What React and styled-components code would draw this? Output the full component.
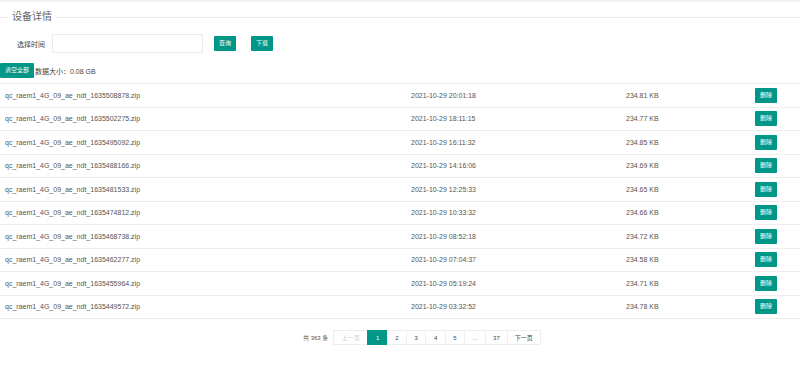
import styled, { createGlobalStyle } from "styled-components";

const GlobalStyle = createGlobalStyle`
  html, body {
    margin: 0;
    padding: 0;
    background: #fff;
  }
  body {
    font-family: "Liberation Sans", Arial, "Noto Sans CJK SC", sans-serif;
    font-size: 7px;
    color: #555;
  }
`;

const TEAL = "#009688";

const Page = styled.div`
  width: 800px;
  border-top: 2px solid #f2f2f2;
`;

const Legend = styled.div`
  display: flex;
  align-items: center;
  height: 12px;
  margin-top: 9px;

  &::before,
  &::after {
    content: "";
    height: 1px;
    background: #eee;
  }
  &::before {
    width: 8px;
  }
  &::after {
    flex: 1;
  }
`;

const LegendText = styled.span`
  padding: 0 4px;
  font-size: 10px;
  color: #666;
  line-height: 12px;
`;

const FormRow = styled.div`
  display: flex;
  align-items: center;
  margin-top: 11px;
`;

const Label = styled.label`
  width: 52px;
  padding-right: 7px;
  text-align: right;
  color: #444;
  box-sizing: border-box;
`;

const Input = styled.div`
  width: 151px;
  height: 19px;
  border: 1px solid #eaeaea;
  border-radius: 1px;
  box-sizing: border-box;
`;

const Button = styled.button`
  height: 15px;
  padding: 0 5px;
  margin: 0;
  margin-left: ${(p) => p.$gap || 0}px;
  border: none;
  border-radius: 1px;
  background: ${TEAL};
  color: #fff;
  font-family: inherit;
  font-size: 6px;
  line-height: 15px;
  cursor: pointer;
  white-space: nowrap;
`;

const Toolbar = styled.div`
  display: flex;
  align-items: center;
  gap: 1px;
  margin-top: 10px;
  height: 15px;
`;

const SizeInfo = styled.span`
  color: #444;
`;

const Table = styled.div`
  margin-top: 5px;
  border-top: 1px solid #eee;
`;

const Row = styled.div`
  display: grid;
  grid-template-columns: 406px 215px 129px 50px;
  align-items: center;
  height: 23.5px;
  border-bottom: 1px solid #eee;
  box-sizing: border-box;
`;

const Cell = styled.div`
  padding-left: 5px;
  white-space: nowrap;
  color: #555;
`;

const Pager = styled.div`
  display: flex;
  align-items: center;
  margin-top: 11px;
  padding-left: 298px;
`;

const Count = styled.span`
  padding: 0 5px;
  font-size: 6px;
  color: #555;
`;

const PageItem = styled.span`
  display: inline-flex;
  align-items: center;
  justify-content: center;
  height: 15px;
  padding: 0 ${(p) => (p.$wide ? 7.5 : 7)}px;
  margin-right: -1px;
  border: 1px solid ${(p) => (p.$current ? TEAL : "#eee")};
  background: ${(p) => (p.$current ? TEAL : "#fff")};
  color: ${(p) => (p.$current ? "#fff" : p.$disabled ? "#d2d2d2" : "#444")};
  font-size: 6px;
  box-sizing: border-box;
`;

const files = [
  ["1635508878", "2021-10-29 20:01:18", "234.81 KB"],
  ["1635502275", "2021-10-29 18:11:15", "234.77 KB"],
  ["1635495092", "2021-10-29 16:11:32", "234.85 KB"],
  ["1635488166", "2021-10-29 14:16:06", "234.69 KB"],
  ["1635481533", "2021-10-29 12:25:33", "234.65 KB"],
  ["1635474812", "2021-10-29 10:33:32", "234.66 KB"],
  ["1635468738", "2021-10-29 08:52:18", "234.72 KB"],
  ["1635462277", "2021-10-29 07:04:37", "234.58 KB"],
  ["1635455964", "2021-10-29 05:19:24", "234.71 KB"],
  ["1635449572", "2021-10-29 03:32:52", "234.78 KB"],
];

export default function App() {
  return (
    <Page>
      <GlobalStyle />
      <Legend>
        <LegendText>设备详情</LegendText>
      </Legend>

      <FormRow>
        <Label>选择时间</Label>
        <Input />
        <Button $gap={11}>查询</Button>
        <Button $gap={15}>下载</Button>
      </FormRow>

      <Toolbar>
        <Button>清空全部</Button>
        <SizeInfo>数据大小：0.08 GB</SizeInfo>
      </Toolbar>

      <Table>
        {files.map(([ts, date, size]) => (
          <Row key={ts}>
            <Cell>qc_raem1_4G_09_ae_ndt_{ts}.zip</Cell>
            <Cell>{date}</Cell>
            <Cell>{size}</Cell>
            <Cell>
              <Button>删除</Button>
            </Cell>
          </Row>
        ))}
      </Table>

      <Pager>
        <Count>共 363 条</Count>
        <PageItem $disabled $wide>上一页</PageItem>
        <PageItem $current $wide>1</PageItem>
        <PageItem $wide>2</PageItem>
        <PageItem $wide>3</PageItem>
        <PageItem $wide>4</PageItem>
        <PageItem $wide>5</PageItem>
        <PageItem>…</PageItem>
        <PageItem>37</PageItem>
        <PageItem>下一页</PageItem>
      </Pager>
    </Page>
  );
}
